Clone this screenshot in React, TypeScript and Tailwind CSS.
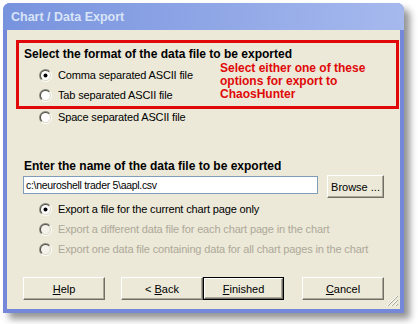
import React from "react";

function Radio({ checked = false, disabled = false }: { checked?: boolean; disabled?: boolean }) {
  return (
    <svg width="13" height="13" viewBox="0 0 13 13" className="shrink-0">
      <defs>
        <linearGradient id="ro" x1="0" y1="0" x2="1" y2="1">
          <stop offset="0.45" stopColor="#8c8a80" />
          <stop offset="0.55" stopColor="#ffffff" />
        </linearGradient>
        <linearGradient id="ri" x1="0" y1="0" x2="1" y2="1">
          <stop offset="0.45" stopColor="#55544d" />
          <stop offset="0.55" stopColor="#dcd9c8" />
        </linearGradient>
      </defs>
      <circle cx="6.5" cy="6.5" r="6.5" fill="url(#ro)" />
      <circle cx="6.5" cy="6.5" r="5.5" fill="url(#ri)" />
      <circle cx="6.5" cy="6.5" r="4.5" fill={disabled ? "#f4f2ea" : "#ffffff"} />
      {checked && <circle cx="6.5" cy="6.5" r="2" fill="#000" />}
    </svg>
  );
}

function RadioRow({
  label,
  checked,
  disabled,
  h = "h-[20px]",
}: {
  label: string;
  checked?: boolean;
  disabled?: boolean;
  h?: string;
}) {
  return (
    <div className={`flex items-center ${h}`}>
      <Radio checked={checked} disabled={disabled} />
      <span className={`ml-[6px] whitespace-nowrap tracking-[-0.15px] ${disabled ? "text-[#aca899]" : "text-black"}`}>{label}</span>
    </div>
  );
}

function Btn({ children, def = false, w = "w-[82px]", ml = "" }: { children: React.ReactNode; def?: boolean; w?: string; ml?: string }) {
  return (
    <div className={`${w} ${ml} h-[23px] ${def ? "border border-black" : ""} shrink-0`}>
      <div className="w-full h-full border border-t-white border-l-white border-r-[#716f64] border-b-[#716f64] bg-[#ece9d8] flex items-center justify-center shadow-[inset_-1px_-1px_0_#aca899]">
        {children}
      </div>
    </div>
  );
}

export default function App() {
  return (
    <div
      className="w-[418px] h-[324px] bg-white overflow-hidden pt-[3px] pl-[3px] text-[11px] leading-[14px]"
      style={{ fontFamily: '"Liberation Sans", Arial, sans-serif' }}
    >
      <div className="w-[401px] h-[310px] rounded-t-[7px] bg-[#7587d8] shadow-[6px_6px_7px_rgba(0,0,0,0.42)] flex flex-col">
        <div className="h-[27px] rounded-t-[7px] bg-gradient-to-r from-[#7893de] to-[#a6b9ee] flex items-center pl-[8px]">
          <span className="text-[12.5px] font-bold text-[#d8e4f8]">Chart / Data Export</span>
        </div>
        <div className="flex-1 mx-[4px] mb-[4px] bg-[#ece9d8] relative">
          {/* red annotation box */}
          <div className="ml-[9px] mt-[10px] w-[383px] h-[69px] border-[3px] border-[#e00808]">
            <div className="pl-[5px] pt-[4px] font-bold h-[18px] text-[12px]">Select the format of the data file to be exported</div>
            <div className="flex">
              <div className="pl-[20px] pt-[4px] w-[201px]">
                <RadioRow label="Comma separated ASCII file" checked />
                <RadioRow label="Tab separated ASCII file" />
              </div>
              <div className="pt-[1px] font-bold text-[#e00808] leading-[13px] text-[12px]">
                <div>Select either one of these</div>
                <div>options for export to</div>
                <div>ChaosHunter</div>
              </div>
            </div>
          </div>
          <div className="pl-[32px]">
            <RadioRow label="Space separated ASCII file" h="h-[16px]" />
          </div>
          <div className="pl-[17px] mt-[34px] font-bold text-[12px]">Enter the name of the data file to be exported</div>
          <div className="flex pl-[16px] mt-[2px]">
            <div className="w-[295px] h-[18px] mt-[1px] bg-white border border-[#7f9db9] flex items-center pl-[2px] whitespace-nowrap text-[10.5px] tracking-[-0.3px]">
              c:\neuroshell trader 5\aapl.csv
            </div>
            <Btn w="w-[57px]" ml="ml-[9px]">
              <span>Browse ...</span>
            </Btn>
          </div>
          <div className="pl-[32px] mt-[1px]">
            <RadioRow label="Export a file for the current chart page only" checked />
            <RadioRow label="Export a different data file for each chart page in the chart" disabled />
            <RadioRow label="Export one data file containing data for all chart pages in the chart" disabled />
          </div>
          <div className="flex pl-[16px] mt-[18px]">
            <Btn>
              <span>
                <u>H</u>elp
              </span>
            </Btn>
            <Btn ml="ml-[16px]">
              <span>
                &lt; <u>B</u>ack
              </span>
            </Btn>
            <Btn def w="w-[81px]">
              <span>
                <u>F</u>inished
              </span>
            </Btn>
            <Btn ml="ml-[18px]">
              <span>
                <u>C</u>ancel
              </span>
            </Btn>
          </div>
          {/* size grip */}
          <svg className="absolute right-[2px] bottom-[2px]" width="12" height="12" viewBox="0 0 12 12">
            <g strokeWidth="1">
              <line x1="11" y1="1" x2="1" y2="11" stroke="#fff" />
              <line x1="12" y1="1" x2="2" y2="11" stroke="#aca899" />
              <line x1="11" y1="5" x2="5" y2="11" stroke="#fff" />
              <line x1="12" y1="5" x2="6" y2="11" stroke="#aca899" />
              <line x1="11" y1="9" x2="9" y2="11" stroke="#fff" />
              <line x1="12" y1="9" x2="10" y2="11" stroke="#aca899" />
            </g>
          </svg>
        </div>
      </div>
    </div>
  );
}
